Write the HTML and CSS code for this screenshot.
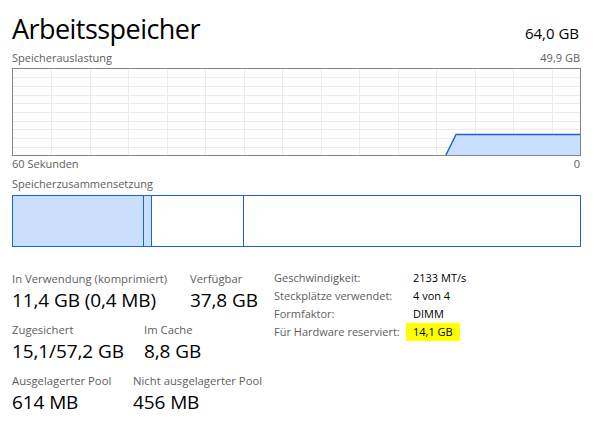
FILE: index.html
```html
<!DOCTYPE html>
<html lang="de">
<head>
<meta charset="utf-8">
<title>Arbeitsspeicher</title>
<link rel="stylesheet" href="styles.css">
</head>
<body>
<main class="panel">
  <header class="head">
    <h1 class="title">Arbeitsspeicher</h1>
    <span class="total">64,0 GB</span>
  </header>

  <div class="caption-row">
    <span>Speicherauslastung</span>
    <span>49,9 GB</span>
  </div>
  <div class="graph">
    <svg class="graph-svg" width="567" height="86" viewBox="0 0 567 86" shape-rendering="crispEdges">
      <g stroke="#ebebeb" stroke-width="1">
        <line x1="0" y1="8.5" x2="567" y2="8.5"/>
        <line x1="0" y1="17.5" x2="567" y2="17.5"/>
        <line x1="0" y1="26.5" x2="567" y2="26.5"/>
        <line x1="0" y1="34.5" x2="567" y2="34.5"/>
        <line x1="0" y1="43.5" x2="567" y2="43.5"/>
        <line x1="0" y1="52.5" x2="567" y2="52.5"/>
        <line x1="0" y1="60.5" x2="567" y2="60.5"/>
        <line x1="0" y1="69.5" x2="567" y2="69.5"/>
        <line x1="0" y1="78.5" x2="567" y2="78.5"/>
        <line x1="38.5" y1="0" x2="38.5" y2="86"/>
        <line x1="77.5" y1="0" x2="77.5" y2="86"/>
        <line x1="115.5" y1="0" x2="115.5" y2="86"/>
        <line x1="154.5" y1="0" x2="154.5" y2="86"/>
        <line x1="192.5" y1="0" x2="192.5" y2="86"/>
        <line x1="231.5" y1="0" x2="231.5" y2="86"/>
        <line x1="269.5" y1="0" x2="269.5" y2="86"/>
        <line x1="308.5" y1="0" x2="308.5" y2="86"/>
        <line x1="346.5" y1="0" x2="346.5" y2="86"/>
        <line x1="385.5" y1="0" x2="385.5" y2="86"/>
        <line x1="423.5" y1="0" x2="423.5" y2="86"/>
        <line x1="462.5" y1="0" x2="462.5" y2="86"/>
        <line x1="500.5" y1="0" x2="500.5" y2="86"/>
        <line x1="539.5" y1="0" x2="539.5" y2="86"/>
      </g>
      <polygon points="432.7,86 443,65.5 567,65.5 567,86" fill="#c6dcfb" fill-opacity="0.92" shape-rendering="geometricPrecision"/>
      <polyline points="432.7,86.5 443,65.5 567,65.5" fill="none" stroke="#1662d8" stroke-width="1.4" shape-rendering="geometricPrecision"/>
    </svg>
  </div>
  <div class="caption-row">
    <span>60 Sekunden</span>
    <span>0</span>
  </div>

  <div class="caption-row caption-row--section">
    <span>Speicherzusammensetzung</span>
  </div>
  <div class="composition">
    <div class="seg seg--used"></div>
    <div class="seg seg--modified"></div>
    <div class="seg seg--standby"></div>
    <div class="seg seg--free"></div>
  </div>

  <section class="details">
    <div class="stats">
      <div class="stat-row">
        <div class="stat stat--w178">
          <div class="stat-label">In Verwendung (komprimiert)</div>
          <div class="stat-value">11,4 GB (0,4 MB)</div>
        </div>
        <div class="stat">
          <div class="stat-label">Verfügbar</div>
          <div class="stat-value">37,8 GB</div>
        </div>
      </div>
      <div class="stat-row">
        <div class="stat stat--w132">
          <div class="stat-label">Zugesichert</div>
          <div class="stat-value">15,1/57,2 GB</div>
        </div>
        <div class="stat">
          <div class="stat-label">Im Cache</div>
          <div class="stat-value">8,8 GB</div>
        </div>
      </div>
      <div class="stat-row">
        <div class="stat stat--w121">
          <div class="stat-label">Ausgelagerter Pool</div>
          <div class="stat-value">614 MB</div>
        </div>
        <div class="stat">
          <div class="stat-label">Nicht ausgelagerter Pool</div>
          <div class="stat-value">456 MB</div>
        </div>
      </div>
    </div>

    <dl class="info">
      <dt>Geschwindigkeit:</dt>
      <dd>2133 MT/s</dd>
      <dt>Steckplätze verwendet:</dt>
      <dd>4 von 4</dd>
      <dt>Formfaktor:</dt>
      <dd>DIMM</dd>
      <dt>Für Hardware reserviert:</dt>
      <dd class="highlight">14,1 GB</dd>
    </dl>
  </section>
</main>
</body>
</html>
```

FILE: styles.css
```css
* {
  box-sizing: border-box;
}

html, body {
  margin: 0;
  padding: 0;
  background: #ffffff;
}

body {
  font-family: "Open Sans", "Noto Sans", "Liberation Sans", sans-serif;
  color: #000000;
  width: 594px;
  height: 424px;
  overflow: hidden;
}

.panel {
  padding: 11px 14px 0 12px;
}

.head {
  display: flex;
  justify-content: space-between;
  align-items: baseline;
}

.title {
  margin: 0;
  font-size: 27px;
  font-weight: 400;
  line-height: 36px;
  letter-spacing: -0.55px;
}

.total {
  font-size: 15px;
  margin-right: 1px;
}

.caption-row {
  display: flex;
  justify-content: space-between;
  font-size: 11px;
  line-height: 16px;
  color: #5e5e5e;
  margin-top: 3px;
}

.caption-row + .graph {
  margin-top: 2px;
}

.graph + .caption-row {
  margin-top: 0;
}

.caption-row--section {
  margin-top: 4px;
}

.graph {
  width: 569px;
  height: 88px;
  border: 1px solid #858585;
}

.graph-svg {
  display: block;
}

.composition {
  display: flex;
  width: 569px;
  height: 52px;
  margin-top: 3px;
  border: 1px solid #1662d8;
}

.seg {
  height: 100%;
}

.seg--used {
  width: 131px;
  background: #c9dffc;
  border-right: 1px solid #1662d8;
}

.seg--modified {
  width: 8px;
  background: #c9dffc;
  border-right: 1px solid #1662d8;
}

.seg--standby {
  width: 92px;
  border-right: 1px solid #1662d8;
}

.seg--free {
  flex: 1;
}

.details {
  display: flex;
  margin-top: 22px;
}

.stats {
  width: 262px;
  padding-top: 2px;
  display: flex;
  flex-direction: column;
  gap: 9px;
}

.stat-row {
  display: flex;
}

.stat {
  white-space: nowrap;
}

.stat--w178 { width: 178px; }
.stat--w132 { width: 132px; }
.stat--w121 { width: 121px; }

.stat-label {
  font-size: 11.3px;
  line-height: 16px;
  color: #5e5e5e;
}

.stat-value {
  font-size: 19px;
  line-height: 26px;
  color: #000000;
  letter-spacing: -0.1px;
}

.info {
  margin: 0;
  display: grid;
  grid-template-columns: 132px auto;
  grid-auto-rows: 18px;
  font-size: 11px;
  line-height: 18px;
  align-content: start;
}

.info dt {
  color: #5e5e5e;
  white-space: nowrap;
}

.info dd {
  margin: 0;
  padding: 0 7px;
  justify-self: start;
  color: #000000;
}

.info .highlight {
  background: #ffff00;
}
```
